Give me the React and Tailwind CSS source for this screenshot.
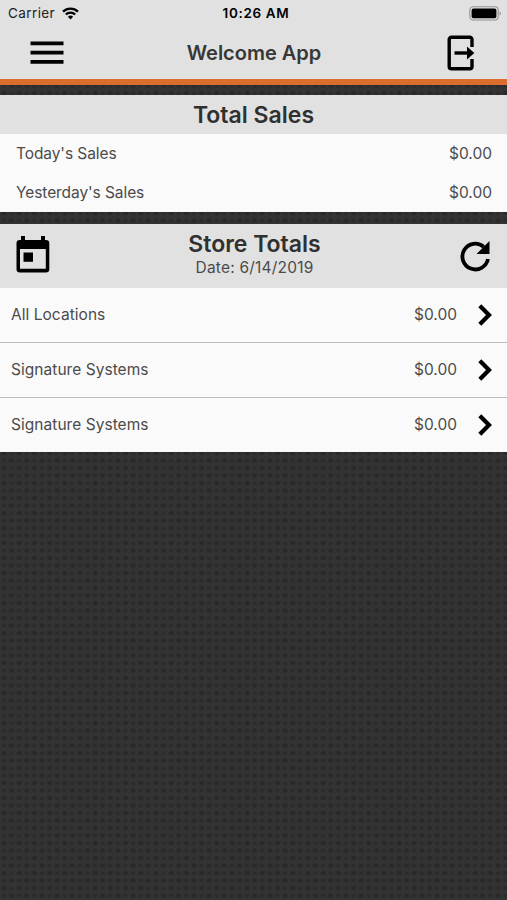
const locations = [
  { name: 'All Locations', total: '$0.00' },
  { name: 'Signature Systems', total: '$0.00' },
  { name: 'Signature Systems', total: '$0.00' },
];

const sales = [
  { label: "Today's Sales", total: '$0.00' },
  { label: "Yesterday's Sales", total: '$0.00' },
];

function StatusBar() {
  return (
    <div className="grid h-[27px] grid-cols-3 items-center pl-[8px] pr-[5px] text-[13.5px] text-[#222]">
      <div className="flex items-center gap-[7px]">
        <span className="tracking-[0.4px]">Carrier</span>
        <svg width="17" height="13" viewBox="0 0 17 13" fill="none" stroke="#000" strokeWidth="2.3">
          <path d="M1 4.6a10.7 10.7 0 0 1 15 0" />
          <path d="M3.8 7.5a6.7 6.7 0 0 1 9.4 0" />
          <path d="M8.5 12.4 5.9 9.8a3.7 3.7 0 0 1 5.2 0z" fill="#000" stroke="none" />
        </svg>
      </div>
      <span className="whitespace-nowrap pl-[2px] text-center font-semibold tracking-[0.65px] text-black">10:26 AM</span>
      <svg className="justify-self-end" width="33" height="15" viewBox="0 0 33 15">
        <rect x="0.8" y="0.8" width="28.4" height="13.2" rx="3.5" fill="none" stroke="#929292" strokeWidth="1.1" />
        <rect x="2.6" y="2.6" width="24.8" height="9.6" rx="1.8" fill="#000" />
        <path d="M30.6 5.2c1.8.7 1.8 3.7 0 4.4z" fill="#929292" />
      </svg>
    </div>
  );
}

function Texture() {
  return (
    <svg className="absolute inset-0 h-full w-full">
      <defs>
        <pattern id="mesh" width="15.2" height="15" patternUnits="userSpaceOnUse">
          <rect width="15.2" height="15" fill="#333333" />
          <rect x="1.5" y="1" width="5" height="4" rx="1.5" fill="#292929" />
          <rect x="9.2" y="1.5" width="4.5" height="3.5" rx="1.5" fill="#2c2c2c" />
          <rect x="1.5" y="8.5" width="4.5" height="4" rx="1.5" fill="#2c2c2c" />
          <rect x="9" y="8.5" width="5" height="4" rx="1.5" fill="#292929" />
        </pattern>
      </defs>
      <rect width="100%" height="100%" fill="url(#mesh)" />
    </svg>
  );
}

export default function App() {
  return (
    <div className="relative h-[900px] w-full overflow-hidden bg-[#303030] font-['Inter','Liberation_Sans',sans-serif] text-[#4b4b4b]">
      <Texture />
      <div className="relative">
        <header className="h-[85px] border-b-[6px] border-[#db6e2d] bg-[#e1e1e1]">
          <StatusBar />
          <div className="grid h-[51px] grid-cols-3 items-center pl-[30px] pr-[32px]">
            <svg width="34" height="24" viewBox="0 0 34 24">
              <path d="M.5 2.3h33M.5 11.6h33M.5 20.8h33" stroke="#000" strokeWidth="3.8" />
            </svg>
            <h1 className="whitespace-nowrap pl-[3px] text-center text-[20px] font-semibold text-[#373737]">Welcome App</h1>
            <svg className="justify-self-end" width="28" height="36" viewBox="0 0 28 36" fill="none" stroke="#000" strokeWidth="3.4">
              <path d="M25 12V4.5a2.3 2.3 0 0 0-2.3-2.3H4.5a2.3 2.3 0 0 0-2.3 2.3v27a2.3 2.3 0 0 0 2.3 2.3h18.2a2.3 2.3 0 0 0 2.3-2.3V24" />
              <path d="M7.5 18H21" />
              <path d="m20 11.5 7.3 6.5-7.3 6.5z" fill="#000" stroke="none" />
            </svg>
          </div>
        </header>

        <section className="mt-[10px] bg-[#fafafa]">
          <h2 className="flex h-[39px] items-center justify-center bg-[#e1e1e1] pt-[2px] text-[23px] font-semibold text-[#303030]">
            Total Sales
          </h2>
          {sales.map((row) => (
            <div key={row.label} className="flex h-[39px] items-center justify-between pl-4 pr-[15px] pt-px text-[15.5px]">
              <span className="tracking-[-0.08px]">{row.label}</span>
              <span>{row.total}</span>
            </div>
          ))}
        </section>

        <section className="mt-3 bg-[#fafafa]">
          <div className="flex h-16 items-center justify-between bg-[#e1e1e1] pl-[16px] pr-[16px]">
            <svg className="-mt-1" width="34" height="38" viewBox="0 0 34 38">
              <path d="M5 1h4v4h16V1h4v4h1a3.3 3.3 0 0 1 3.3 3.3v26a3.3 3.3 0 0 1-3.3 3.2H3.8a3.3 3.3 0 0 1-3.3-3.2v-26A3.3 3.3 0 0 1 3.8 5H5zM4 14v19.7h25.8V14z" fillRule="evenodd" />
              <path d="M7.5 17.5H17v9.3H7.5z" />
            </svg>
            <div className="-mt-[2px] text-center">
              <h2 className="text-[23px] font-semibold leading-[26px] text-[#303030]">Store Totals</h2>
              <p className="text-[15.5px] leading-[22px] tracking-[0.2px]">Date: 6/14/2019</p>
            </div>
            <svg width="32" height="32" viewBox="0 0 32 32" fill="none">
              <path d="M29 19A12.9 12.9 0 1 1 24.7 6.7" stroke="#000" strokeWidth="3.8" />
              <path d="M30.5 1v13h-13z" fill="#000" />
            </svg>
          </div>
          {locations.map((row, i) => (
            <div
              key={i}
              className="flex h-[55px] items-center border-b border-[#bdbdbd] pl-[11px] pr-[14px] text-[15.5px] last:h-[54px] last:border-b-0"
            >
              <span className="flex-1 tracking-[0.04px]">{row.name}</span>
              <span className="mr-[21px]">{row.total}</span>
              <svg width="15" height="22" viewBox="0 0 15 22" fill="none" stroke="#000" strokeWidth="4.2">
                <path d="m1.8 1.8 9.2 9.2-9.2 9.2" />
              </svg>
            </div>
          ))}
        </section>
      </div>
    </div>
  );
}
